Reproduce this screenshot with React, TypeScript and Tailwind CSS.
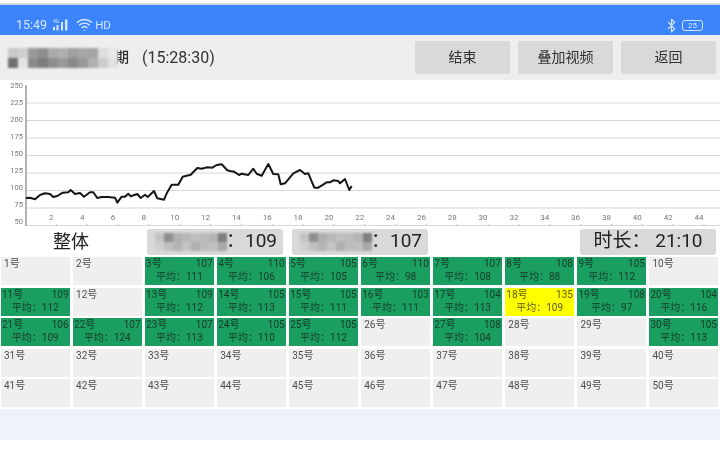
import * as React from 'react';
import { Bluetooth, Wifi } from 'lucide-react';

type Seat = { hr?: number; avg?: number; alert?: boolean };

// keyed by seat number, everything else is an empty seat
const seats: Record<number, Seat> = {
  3: { hr: 107, avg: 111 },
  4: { hr: 110, avg: 106 },
  5: { hr: 105, avg: 105 },
  6: { hr: 110, avg: 98 },
  7: { hr: 107, avg: 108 },
  8: { hr: 108, avg: 88 },
  9: { hr: 105, avg: 112 },
  11: { hr: 109, avg: 112 },
  13: { hr: 109, avg: 112 },
  14: { hr: 105, avg: 113 },
  15: { hr: 105, avg: 111 },
  16: { hr: 103, avg: 111 },
  17: { hr: 104, avg: 113 },
  18: { hr: 135, avg: 109, alert: true },
  19: { hr: 108, avg: 97 },
  20: { hr: 104, avg: 116 },
  21: { hr: 106, avg: 109 },
  22: { hr: 107, avg: 124 },
  23: { hr: 107, avg: 113 },
  24: { hr: 105, avg: 110 },
  25: { hr: 105, avg: 112 },
  27: { hr: 108, avg: 104 },
  30: { hr: 105, avg: 113 },
};

const yLabels = [250, 225, 200, 175, 150, 125, 100, 75, 50];
const xLabels = Array.from({ length: 22 }, (_, i) => (i + 1) * 2);

const tracePoints =
  '26,198 30,197.7 35,199.3 40,195 45,193.3 50,194 53.3,197 57.3,196 62.7,192.7 68.3,192.3 70.7,190 75,194 80,193 84,196.7 90,192.3 93.3,192.3 97.3,198 101.7,197 108.3,197 115,197.7 117.3,202.7 121.7,196.7 125,196.7 128.3,193.7 130.7,196.3 137.3,194 140.7,198 145,194.7 147.7,197 154,191 157.3,198.3 164,199.7 166.7,193.3 171.7,184.7 178.3,184.7 182.7,176.7 190.7,174.7 197.3,168 201.7,168.7 207.3,167.3 212.3,167.7 216.7,165 221.7,164.3 227.3,170.3 230,171 234,171.7 239,175 241.7,173.7 248.3,175 253.3,168.7 256.7,173.7 261.7,175.7 268.3,164 273.3,174 278.3,174.3 280.7,184.3 285,183.3 293.3,173.3 300,170 305,174 308.3,173.3 314.3,187.7 318.3,187.7 326.7,182.3 330,182.3 333.3,180.3 338.3,181 340,183.3 345,179 349.3,190 351.7,186';

function Mosaic({ rows, size, className }: { rows: string[][]; size: number; className: string }) {
  return (
    <svg
      className={className}
      width={rows[0].length * size}
      height={rows.length * size}
      viewBox={`0 0 ${rows[0].length * size} ${rows.length * size}`}
    >
      {rows.map((row, y) =>
        row.map((fill, x) => <rect key={`${x}-${y}`} x={x * size} y={y * size} width={size} height={size} fill={fill} />)
      )}
    </svg>
  );
}

const titleMosaic = [
  ['#c8c8c8', '#cfcfcf', '#9a9a9a', '#8f8f8f', '#aaaaaa', '#b0b0b0', '#a0a0a0', '#a8a8a8', '#a4a4a4', '#dddddd', '#e8e8e8'],
  ['#6f6f6f', '#e4e4e4', '#8b8b8b', '#7c7c7c', '#8e8e8e', '#9a9a9a', '#8a8a8a', '#999999', '#b0b0b0', '#cccccc', '#e0e0e0'],
];
const statMosaic = [
  ['#c4c4c4', '#8f8f8f', '#b0b0b0', '#b8b8b8', '#c0c0c0', '#bcbcbc', '#b4b4b4', '#7f7f7f'],
  ['#cfcfcf', '#c0c0c0', '#b4b4b4', '#c4c4c4', '#b0b0b0', '#bcbcbc', '#c0c0c0', '#a8a8a8'],
];

function StatusBar() {
  return (
    <div className="flex h-[30px] items-end justify-between bg-[#3b84fb] pb-[2px] pl-[16px] pr-[17px] text-[12.5px] leading-[16px] text-[#d5e6ff]">
      <div className="flex items-center gap-[6px]">
        <span>15:49</span>
        <svg width="17" height="12" viewBox="0 0 17 12" fill="currentColor">
          <text x="0" y="4" fontSize="5">
            4G
          </text>
          <rect x="0" y="8" width="2" height="3.5" />
          <rect x="3.5" y="6" width="2" height="5.5" />
          <rect x="8" y="3" width="2" height="8.5" />
          <rect x="12" y="0.5" width="2.4" height="11" />
        </svg>
        <Wifi size={17} strokeWidth={2} />
        <span className="-ml-[4px] text-[11.5px]">HD</span>
      </div>
      <div className="flex items-center gap-[3px]">
        <Bluetooth size={15} strokeWidth={2} />
        <div className="flex h-[11px] w-[21px] items-center justify-center rounded-[3px] border border-[#d5e6ff] text-[8px] leading-none">
          25
        </div>
      </div>
    </div>
  );
}

function Header() {
  return (
    <div className="flex h-[45px] items-center bg-[#eeeeee] pl-[8px] pr-[4px]">
      <div className="flex items-center">
        <Mosaic rows={titleMosaic} size={10} className="blur-[1px]" />
        <span className="-ml-[3px] text-[14px] font-medium text-[#2c2c2c]">期</span>
        <span className="ml-[13px] text-[16px] text-[#333333]">(15:28:30)</span>
      </div>
      <div className="ml-auto flex gap-[8px]">
        {['结束', '叠加视频', '返回'].map((label) => (
          <div
            key={label}
            className="flex h-[33px] w-[95px] items-center justify-center rounded-[2px] bg-[#d9d9d9] text-[14px] text-[#303030]"
          >
            {label}
          </div>
        ))}
      </div>
    </div>
  );
}

function Chart() {
  return (
    <div className="h-[148px] bg-white">
      <svg width="720" height="148" viewBox="0 80 720 148" className="block">
        {yLabels.map((v, i) => (
          <g key={v}>
            {i > 0 && <line x1="26" x2="720" y1={85.5 + i * 17.5} y2={85.5 + i * 17.5} stroke="#d8d8d8" strokeWidth="1.2" />}
            <text x="23" y={87.7 + i * 17} fontSize="7.5" fill="#777777" textAnchor="end">
              {v}
            </text>
          </g>
        ))}
        <line x1="26" x2="26" y1="85" y2="226" stroke="#9a9a9a" strokeWidth="1.5" />
        {xLabels.map((v) => {
          const x = 20.5 + v * 15.42;
          return (
            <g key={v}>
              <text x={x} y="220" fontSize="8" fill="#777777" textAnchor="middle">
                {v}
              </text>
              <line x1={x + 5} x2={x + 5} y1="224" y2="226" stroke="#c4c4c4" strokeWidth="1" />
            </g>
          );
        })}
        <polyline points={tracePoints} fill="none" stroke="#161616" strokeWidth="2" strokeLinejoin="round" />
      </svg>
    </div>
  );
}

function StatRow() {
  return (
    <div className="flex h-[27px] items-center pr-[4px] text-[#222222]">
      <div className="w-[142px] text-center text-[18px]">整体</div>
      <div className="ml-[5px] flex h-[26px] w-[136px] items-center rounded-[3px] bg-[#d9d9d9] pl-[8px] text-[19px]">
        <Mosaic rows={statMosaic} size={9} className="blur-[1px]" />
        <span className="-ml-[1px]">：109</span>
      </div>
      <div className="ml-[9px] flex h-[26px] w-[136px] items-center rounded-[3px] bg-[#d9d9d9] pl-[8px] text-[19px]">
        <Mosaic rows={statMosaic} size={9} className="blur-[1px]" />
        <span className="-ml-[1px]">：107</span>
      </div>
      <div className="ml-auto flex h-[26px] w-[136px] items-center justify-center rounded-[3px] bg-[#d9d9d9] text-[19px]">
        时长： 21:10
      </div>
    </div>
  );
}

function SeatCell({ no }: { no: number }) {
  const seat = seats[no];
  if (!seat) {
    return <div className="h-[28px] bg-[#efefef] pl-[3px] text-[10px] leading-[13px] text-[#4d4d4d]">{no}号</div>;
  }
  return (
    <div
      className={`flex h-[28px] flex-col text-[10px] leading-[13px] ${
        seat.alert ? 'bg-[#ffff00] text-[#5a5a10]' : 'bg-[#1b9f60] text-[#173a28]'
      }`}
    >
      <div className="flex justify-between px-[1px]">
        <span>{no}号</span>
        <span>{seat.hr}</span>
      </div>
      <div className="text-center">平均：{seat.avg}</div>
    </div>
  );
}

export default function App() {
  return (
    <div
      className="flex h-[450px] w-[720px] flex-col overflow-hidden bg-white blur-[0.3px]"
      style={{ fontFamily: 'Roboto, "Noto Sans CJK SC", sans-serif' }}
    >
      <div className="mt-[3px] h-[2px] bg-[#cfd8dc]" />
      <StatusBar />
      <Header />
      <Chart />
      <StatRow />
      <div className="mt-[2px] grid grid-cols-10 gap-x-[3.5px] gap-y-[2.5px] pl-[1px] pr-[2px]">
        {Array.from({ length: 50 }, (_, i) => (
          <SeatCell key={i} no={i + 1} />
        ))}
      </div>
      <div className="mt-[2px] h-[31px] bg-[#eef2fa]" />
    </div>
  );
}
